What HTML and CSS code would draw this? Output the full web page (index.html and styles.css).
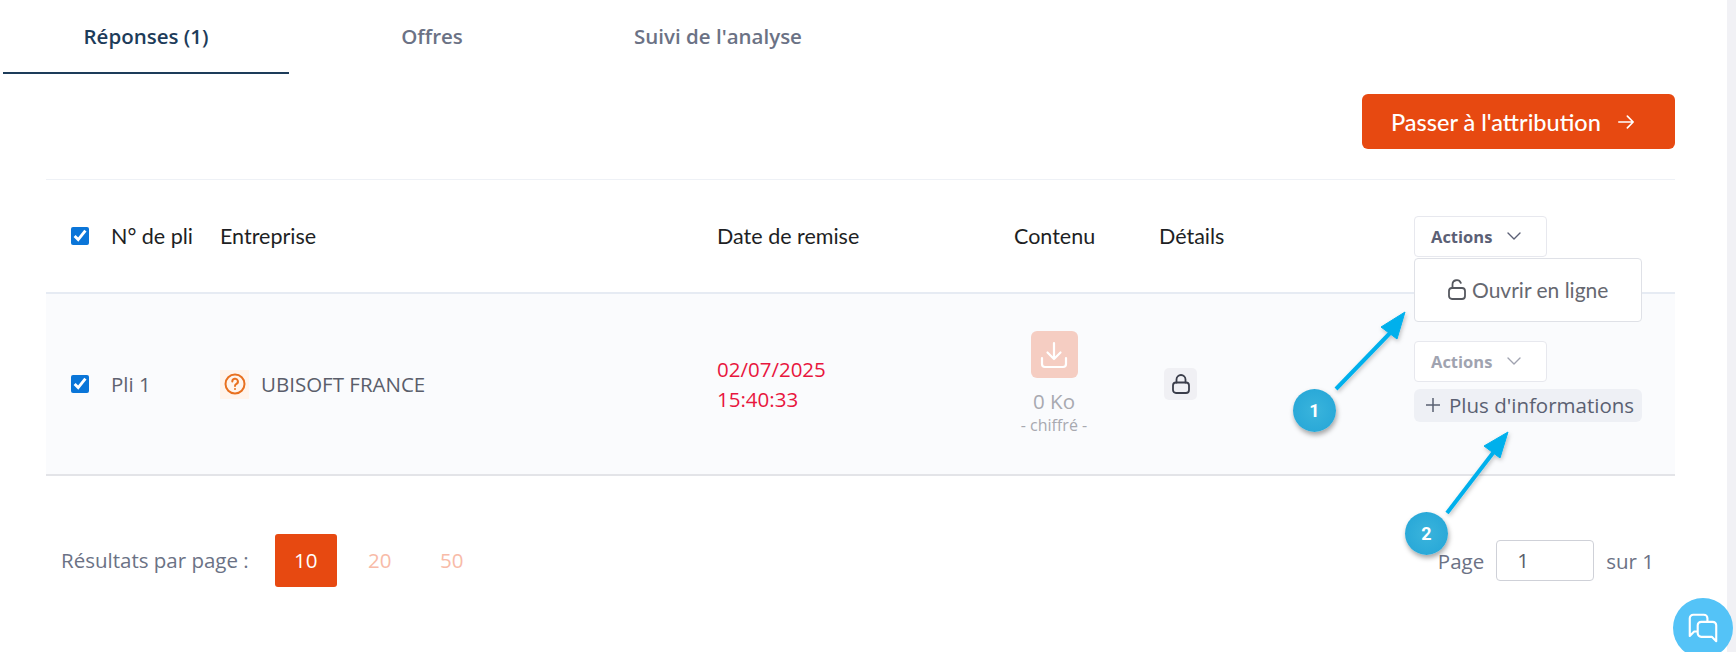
FILE: index.html
```html
<!DOCTYPE html>
<html lang="fr">
<head>
  <meta charset="UTF-8">
  <title>Réponses</title>
  <link rel="stylesheet" href="styles.css">
</head>
<body>

  <nav class="tabs">
    <a class="tab active">Réponses (1)</a>
    <a class="tab">Offres</a>
    <a class="tab">Suivi de l'analyse</a>
  </nav>

  <main class="content">
    <div class="toolbar">
      <button class="btn-primary">
        Passer à l'attribution
        <svg width="18" height="18" viewBox="0 0 20 20" fill="none" stroke="#fff" stroke-width="1.800" stroke-linecap="round" stroke-linejoin="round"><path d="M2 10h16M11.500 3.500 18 10l-6.500 6.500"/></svg>
      </button>
    </div>

    <div class="table">
      <div class="row head">
        <input type="checkbox" class="check" checked>
        <span>N° de pli</span>
        <span>Entreprise</span>
        <span>Date de remise</span>
        <span class="center">Contenu</span>
        <span class="details">Détails</span>
        <div class="actions">
          <button class="btn-actions">
            Actions
            <svg width="14" height="8" viewBox="0 0 14 8" fill="none" stroke="currentColor" stroke-width="1.400" stroke-linecap="round" stroke-linejoin="round"><path d="M1 1l6 6 6-6"/></svg>
          </button>
          <div class="menu">
            <svg width="18" height="21" viewBox="0 0 18 21" fill="none" stroke="#55585f" stroke-width="1.800" stroke-linecap="round" stroke-linejoin="round"><rect x="1" y="9" width="16" height="11" rx="3"/><path d="M4.500 9V5.500a4.300 4.300 0 0 1 8.300-1.600"/></svg>
            Ouvrir en ligne
          </div>
        </div>
      </div>

      <div class="row item">
        <input type="checkbox" class="check" checked>
        <span class="muted">Pli 1</span>
        <div class="company">
          <span class="status">
            <svg width="22" height="22" viewBox="0 0 22 22" fill="none" stroke="#e8701f" stroke-width="2" stroke-linecap="round"><circle cx="11" cy="11" r="9.500"/><path d="M8.300 8.500a2.800 2.800 0 1 1 4.200 2.400c-1 .6-1.500 1.100-1.500 2.100"/><path d="M11 16v.1"/></svg>
          </span>
          UBISOFT FRANCE
        </div>
        <div class="date">02/07/2025<br>15:40:33</div>
        <div class="file">
          <span class="file-tile">
            <svg width="28" height="28" viewBox="0 0 28 28" fill="none" stroke="#fff" stroke-width="2.200" stroke-linecap="round" stroke-linejoin="round"><path d="M14 2v16M7.500 11.500 14 18l6.500-6.500"/><path d="M2 17v6a3 3 0 0 0 3 3h18a3 3 0 0 0 3-3v-6"/></svg>
          </span>
          <span class="file-size">0 Ko</span>
          <span class="file-note">- chiffré -</span>
        </div>
        <div class="details">
          <span class="lock-tile">
            <svg width="18" height="20" viewBox="0 0 18 20" fill="none" stroke="#3a3d4a" stroke-width="1.800" stroke-linecap="round" stroke-linejoin="round"><rect x="1" y="8.500" width="16" height="10.500" rx="3"/><path d="M4.500 8.500V5.500a4.500 4.500 0 0 1 9 0v3"/></svg>
          </span>
        </div>
        <div class="actions stack">
          <button class="btn-actions faded">
            Actions
            <svg width="14" height="8" viewBox="0 0 14 8" fill="none" stroke="currentColor" stroke-width="1.400" stroke-linecap="round" stroke-linejoin="round"><path d="M1 1l6 6 6-6"/></svg>
          </button>
          <button class="btn-more">
            <svg width="14" height="14" viewBox="0 0 14 14" fill="none" stroke="#5a6072" stroke-width="1.500" stroke-linecap="round"><path d="M7 0v14M0 7h14"/></svg>
            Plus d'informations
          </button>
        </div>
      </div>
    </div>

    <div class="pager">
      <div class="per-page">
        <span class="per-label">Résultats par page :</span>
        <span class="size current">10</span>
        <span class="size">20</span>
        <span class="size">50</span>
      </div>
      <div class="page-nav">
        Page
        <span class="page-input">1</span>
        sur 1
      </div>
    </div>
  </main>

  <div class="scrollbar"></div>

  <!-- annotations par-dessus la capture -->
  <svg class="arrows" width="1736" height="652" viewBox="0 0 1736 652">
    <defs>
      <filter id="ombre" x="-30%" y="-30%" width="160%" height="160%">
        <feDropShadow dx="1" dy="2" stdDeviation="2" flood-color="#000" flood-opacity=".25"/>
      </filter>
    </defs>
    <g fill="#00b0ec" stroke="#00b0ec" filter="url(#ombre)">
      <path d="M1336 389 1392 331" stroke-width="4" fill="none"/>
      <path d="M1405 312 1397 339 1381 327Z" stroke-width="1"/>
      <path d="M1447 513 1496 449" stroke-width="4" fill="none"/>
      <path d="M1508 432 1500 458 1484 446Z" stroke-width="1"/>
    </g>
  </svg>
  <span class="pin pin-one">1</span>
  <span class="pin pin-two">2</span>

  <div class="chat">
    <svg width="30" height="30" viewBox="0 0 34 34" fill="none" stroke="#fff" stroke-width="2.400" stroke-linejoin="round"><path d="M11 21H7l-5 5V6a4 4 0 0 1 4-4h12a4 4 0 0 1 4 4v4"/><path d="M15 10h13a4 4 0 0 1 4 4v18l-5-5H15a4 4 0 0 1-4-4v-9a4 4 0 0 1 4-4z"/></svg>
  </div>

</body>
</html>
```

FILE: styles.css
```css
* {
  margin: 0;
  padding: 0;
  box-sizing: border-box;
}

html, body {
  height: 652px;
  overflow: hidden;
}

body {
  position: relative;
  font-family: 'Open Sans', sans-serif;
  font-size: 20.500px;
  color: #5a5e6b;
  background-color: #fff;
}

button {
  font: inherit;
  border: none;
  background: none;
}

.tabs {
  display: flex;
  padding-left: 3px;
}

.tab {
  width: 286px;
  height: 74px;
  padding-top: 23px;
  text-align: center;
  font-weight: 600;
  line-height: 26px;
  color: #6b7285;
}

.tab.active {
  color: #1d3c5a;
  border-bottom: 2px solid #1d3c5a;
}

.content {
  padding: 0 61px 0 46px;
}

.toolbar {
  display: flex;
  justify-content: flex-end;
  padding-top: 20px;
  height: 105px;
}

.btn-primary {
  display: flex;
  align-items: center;
  gap: 16px;
  width: 313px;
  height: 55px;
  padding-left: 29px;
  border-radius: 6px;
  font-family: 'Lato', sans-serif;
  font-size: 23.500px;
  font-weight: 500;
  color: #fff;
  background-color: #e74911;
}

.table {
  border-top: 1px solid #eef1f6;
}

.row {
  display: grid;
  grid-template-columns: 40px 109px 497px 297px 80px 320px 1fr;
  align-items: center;
  padding-left: 25px;
}

.row.head {
  height: 114px;
  border-bottom: 2px solid #e6ebf3;
  font-family: 'Lato', sans-serif;
  font-size: 21.500px;
  color: #1e1f24;
}

.row.item {
  height: 182px;
  border-bottom: 2px solid #e3e4e8;
  background-color: #fafbfd;
}

.check {
  width: 18px;
  height: 18px;
  accent-color: #0a75d8;
}

.center {
  text-align: center;
}

.details {
  padding-left: 65px;
}

.muted {
  color: #5f6270;
}

.company {
  display: flex;
  align-items: center;
  gap: 12px;
}

.status {
  display: flex;
  align-items: center;
  justify-content: center;
  width: 29px;
  height: 29px;
  background-color: #fff4ec;
}

.date {
  line-height: 30px;
  color: #e8163e;
}

.file {
  display: flex;
  flex-direction: column;
  align-items: center;
  padding-bottom: 2px;
  color: #a8a9b0;
}

.file-tile {
  display: flex;
  align-items: center;
  justify-content: center;
  width: 47px;
  height: 47px;
  border-radius: 6px;
  background-color: #f5cdc2;
}

.file-size {
  margin-top: 9px;
  line-height: 28px;
}

.file-note {
  font-size: 16px;
  line-height: 20px;
  white-space: nowrap;
}

.lock-tile {
  display: flex;
  align-items: center;
  justify-content: center;
  width: 33px;
  height: 32px;
  margin-left: 5px;
  border-radius: 5px;
  background-color: #f0f0f4;
}

.actions {
  position: relative;
}

.stack {
  display: flex;
  flex-direction: column;
  align-items: flex-start;
  gap: 7px;
  padding-bottom: 6px;
}

.btn-actions {
  display: flex;
  align-items: center;
  gap: 15px;
  width: 133px;
  height: 41px;
  padding-left: 16px;
  border: 1px solid #e7e8ee;
  border-radius: 4px;
  background-color: #fff;
  font-family: 'Open Sans', sans-serif;
  font-size: 16.500px;
  font-weight: 700;
  color: #5b6075;
}

.btn-actions.faded {
  color: #a0a3b0;
}

.menu {
  position: absolute;
  top: 42px;
  left: 0;
  z-index: 2;
  display: flex;
  align-items: center;
  gap: 6px;
  width: 228px;
  height: 64px;
  padding-left: 33px;
  border: 1px solid #dfe1e7;
  border-radius: 4px;
  background-color: #fff;
  font-family: 'Lato', sans-serif;
  font-size: 21px;
  color: #666870;
  white-space: nowrap;
}

.btn-more {
  display: flex;
  align-items: center;
  gap: 9px;
  width: 228px;
  height: 33px;
  padding-left: 12px;
  border-radius: 6px;
  background-color: #eef0f5;
  color: #5a6072;
  font-size: 20.500px;
  white-space: nowrap;
}

.pager {
  display: flex;
  align-items: center;
  justify-content: space-between;
  padding: 58px 21px 0 15px;
  color: #6b7285;
  line-height: 26px;
}

.per-page {
  display: flex;
  align-items: center;
}

.per-label {
  margin: -2px 26px 0 0;
}

.size {
  width: 72px;
  height: 53px;
  line-height: 53px;
  text-align: center;
  color: #f8bba8;
}

.size.current {
  width: 62px;
  margin-right: 7px;
  border-radius: 3px;
  color: #fff;
  background-color: #e74911;
}

.page-nav {
  display: flex;
  align-items: center;
  gap: 12px;
}

.page-input {
  width: 98px;
  height: 41px;
  padding-left: 20px;
  line-height: 39px;
  border: 1px solid #cfd1d8;
  border-radius: 4px;
  color: #5a5e6b;
}

.scrollbar {
  position: absolute;
  top: 0;
  right: 0;
  bottom: 0;
  width: 9px;
  background-color: #f1f1f5;
}

.arrows {
  position: absolute;
  top: 0;
  left: 0;
  z-index: 3;
  pointer-events: none;
}

.pin {
  position: absolute;
  z-index: 4;
  width: 43px;
  height: 43px;
  border-radius: 50%;
  line-height: 43px;
  text-align: center;
  font-family: 'Roboto', sans-serif;
  font-size: 18px;
  font-weight: 700;
  color: #fff;
  background: radial-gradient(circle, #3ab4dc, #2aa9d8 70%, #14a6e0);
  box-shadow: 1px 3px 5px rgba(0, 0, 0, 0.35);
}

.pin-one {
  top: 389px;
  left: 1293px;
}

.pin-two {
  top: 512px;
  left: 1405px;
}

.chat {
  position: absolute;
  top: 598px;
  left: 1673px;
  z-index: 5;
  display: flex;
  align-items: center;
  justify-content: center;
  width: 60px;
  height: 60px;
  border-radius: 50%;
  background-color: #54c3f7;
}
```
